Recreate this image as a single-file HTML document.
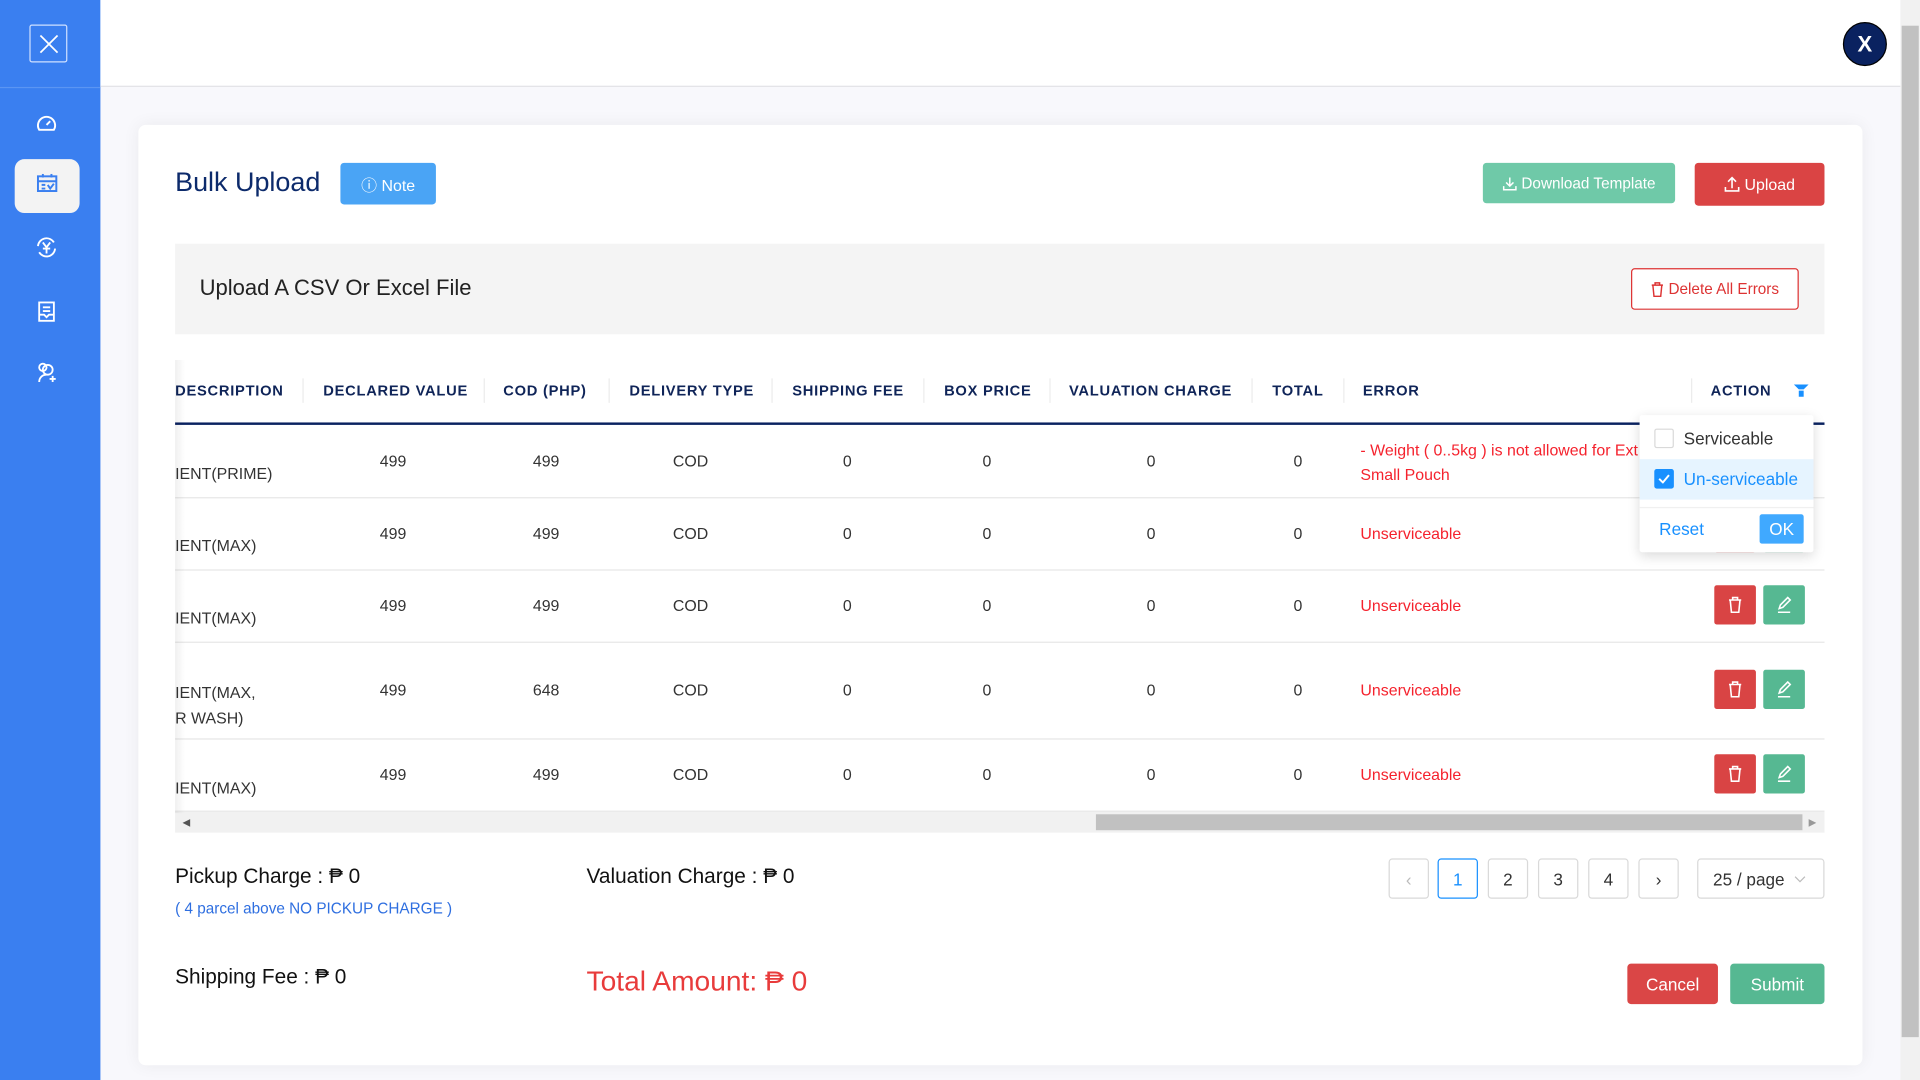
<!DOCTYPE html>
<html><head><meta charset="utf-8"><style>
*{box-sizing:border-box;margin:0;padding:0}
html,body{width:1920px;height:1080px;overflow:hidden;background:#fff;font-family:"Liberation Sans",sans-serif}
#w{position:absolute;left:0;top:0;width:1568px;height:882px;transform:scale(1.22449);transform-origin:0 0;background:#f8f8fc}
.a{position:absolute}
.side{left:0;top:0;width:82px;height:882px;background:#3a7ff0}
.hdr{left:82px;top:0;width:1470px;height:71px;background:#fff;border-bottom:1px solid #e2e2e6}
.card{left:113px;top:102px;width:1408px;height:768px;background:#fff;border-radius:6px;box-shadow:0 0 14px rgba(0,0,0,.06)}
.th{top:312px;font-size:12px;font-weight:bold;color:#0f2458;letter-spacing:.6px;white-space:nowrap}
.sep{top:309px;width:1px;height:20px;background:#ececec}
.td{font-size:13px;color:#333;white-space:nowrap;transform:translateX(-50%)}
.err{font-size:13px;color:#f5222d;white-space:nowrap}
.hl{left:143px;width:1347px;height:1px;background:#e6e6e6}
.btn{border-radius:3px;color:#fff;font-size:12.5px;display:flex;align-items:center;justify-content:center}
.ib{width:34px;height:32px;border-radius:2px;display:flex;align-items:center;justify-content:center}
.pg{top:701px;width:33px;height:33px;border:1px solid #d9d9d9;border-radius:3px;font-size:14px;color:#333;display:flex;align-items:center;justify-content:center;background:#fff}
</style></head><body><div id="w">
<div class="a side">
 <div class="a" style="left:24px;top:20px;width:31px;height:31px;border:1px solid #cfe0ff;border-radius:2px"><svg class="a" style="left:7px;top:7px" width="16" height="16" viewBox="0 0 16 16" stroke="#fff" stroke-width="1.4"><path d="M1 1l14 14M15 1L1 15"/></svg></div>
 <div class="a" style="left:0;top:71px;width:82px;height:1px;background:#5a95f3"></div>
 <svg class="a" style="left:29px;top:92px" width="18" height="16" viewBox="0 0 18 16" fill="none" stroke="#fff" stroke-width="1.6"><path d="M3 14a7 7 0 1 1 12 0z"/><path d="M9 10l3-3"/></svg>
 <div class="a" style="left:12px;top:130px;width:53px;height:44px;background:#f3f3f3;border-radius:8px"></div>
 <svg class="a" style="left:30px;top:142px" width="17" height="15" viewBox="0 0 17 15" fill="none" stroke="#3a7ff0" stroke-width="1.6"><rect x="1" y="2" width="15" height="12"/><path d="M1 6h15M5 0v3M12 0v3M4 9h3M4 12h3M9 9l2 3 3-4"/></svg>
 <svg class="a" style="left:29px;top:193px" width="18" height="18" viewBox="0 0 18 18" fill="none" stroke="#fff" stroke-width="1.5"><path d="M2 8a7 7 0 0 1 13-3M16 10a7 7 0 0 1-13 3M6 5l3 4 3-4M9 9v5M6 10h6"/></svg>
 <svg class="a" style="left:31px;top:246px" width="14" height="17" viewBox="0 0 14 17" fill="none" stroke="#fff" stroke-width="1.5"><rect x="1" y="1" width="12" height="15"/><path d="M4 5h6M4 8h6M1 11h4l2 2 2-2h4"/></svg>
 <svg class="a" style="left:30px;top:296px" width="18" height="17" viewBox="0 0 18 17" fill="none" stroke="#fff" stroke-width="1.5"><circle cx="9" cy="6" r="4"/><path d="M2 16c0-4 3-6 6-6M13 11v5M10.5 13.5h5"/><circle cx="5" cy="4" r="3"/></svg>
</div>
<div class="a hdr"></div>
<div class="a" style="left:1505px;top:18px;width:36px;height:36px;border-radius:50%;background:#0a2260;border:1px solid #000;color:#fff;font-weight:bold;font-size:18px;display:flex;align-items:center;justify-content:center">X</div>
<div class="a" style="left:1552px;top:0;width:16px;height:882px;background:#f1f1f1"><div class="a" style="left:1px;top:21px;width:14px;height:826px;background:#c1c1c1"></div></div>
<div class="a card"></div>
<div class="a" style="left:143px;top:136px;font-size:22px;color:#0c2a6b">Bulk Upload</div>
<div class="a btn" style="left:278px;top:133px;width:78px;height:34px;background:#4aa4f5;font-size:13px">ⓘ&nbsp;Note</div>
<div class="a btn" style="left:1211px;top:133px;width:157px;height:33px;background:#6fc9a8"><svg width="12" height="12" viewBox="0 0 12 12" fill="none" stroke="#fff" stroke-width="1.2"><path d="M6 1v7M3 5l3 3 3-3M1 8v3h10V8"/></svg>&nbsp;Download Template</div>
<div class="a btn" style="left:1384px;top:133px;width:106px;height:35px;background:#da4444;font-size:13px"><svg width="13" height="13" viewBox="0 0 12 12" fill="none" stroke="#fff" stroke-width="1.2"><path d="M6 9V1M3 4l3-3 3 3M1 8v3h10V8"/></svg>&nbsp;Upload</div>
<div class="a" style="left:143px;top:199px;width:1347px;height:74px;background:#f4f4f4"></div>
<div class="a" style="left:163px;top:225px;font-size:18px;color:#222">Upload A CSV Or Excel File</div>
<div class="a" style="left:1332px;top:219px;width:137px;height:34px;border:1px solid #d33;border-radius:3px;color:#d33;font-size:12.5px;display:flex;align-items:center;justify-content:center;background:#fff"><svg width="11" height="13" viewBox="0 0 12 14" fill="none" stroke="#d33" stroke-width="1.3"><path d="M1 3h10M4 3V1h4v2M2 3l1 10h6l1-10"/></svg>&nbsp;Delete All Errors</div>

<div class="a th" style="left:143px">DESCRIPTION</div><div class="a sep" style="left:247px"></div>
<div class="a th" style="left:264px">DECLARED VALUE</div><div class="a sep" style="left:395px"></div>
<div class="a th" style="left:411px">COD (PHP)</div><div class="a sep" style="left:497px"></div>
<div class="a th" style="left:514px">DELIVERY TYPE</div><div class="a sep" style="left:630px"></div>
<div class="a th" style="left:647px">SHIPPING FEE</div><div class="a sep" style="left:754px"></div>
<div class="a th" style="left:771px">BOX PRICE</div><div class="a sep" style="left:857px"></div>
<div class="a th" style="left:873px">VALUATION CHARGE</div><div class="a sep" style="left:1022px"></div>
<div class="a th" style="left:1039px">TOTAL</div><div class="a sep" style="left:1097px"></div>
<div class="a th" style="left:1113px">ERROR</div><div class="a sep" style="left:1381px"></div>
<div class="a th" style="left:1397px">ACTION</div>
<svg class="a" style="left:1465px;top:313px" width="12" height="12" viewBox="0 0 12 12"><path d="M0 1h12L8 5H4z M4 6h4v5H4z" fill="#1890ff"/></svg>
<div class="a" style="left:143px;top:345px;width:1347px;height:2px;background:#0a2260"></div>
<div class="a hl" style="top:406px"></div><div class="a hl" style="top:465px"></div><div class="a hl" style="top:524px"></div><div class="a hl" style="top:603px"></div><div class="a hl" style="top:662px"></div>

<div class="a" style="left:143px;top:379px;font-size:13px;color:#333">IENT(PRIME)</div>
<div class="a" style="left:143px;top:438px;font-size:13px;color:#333">IENT(MAX)</div>
<div class="a" style="left:143px;top:497px;font-size:13px;color:#333">IENT(MAX)</div>
<div class="a" style="left:143px;top:555px;font-size:13px;color:#333;line-height:21px">IENT(MAX,<br>R WASH)</div>
<div class="a" style="left:143px;top:636px;font-size:13px;color:#333">IENT(MAX)</div>

<div class="a td" style="left:321px;top:369px">499</div><div class="a td" style="left:446px;top:369px">499</div><div class="a td" style="left:564px;top:369px">COD</div><div class="a td" style="left:692px;top:369px">0</div><div class="a td" style="left:806px;top:369px">0</div><div class="a td" style="left:940px;top:369px">0</div><div class="a td" style="left:1060px;top:369px">0</div>
<div class="a td" style="left:321px;top:428px">499</div><div class="a td" style="left:446px;top:428px">499</div><div class="a td" style="left:564px;top:428px">COD</div><div class="a td" style="left:692px;top:428px">0</div><div class="a td" style="left:806px;top:428px">0</div><div class="a td" style="left:940px;top:428px">0</div><div class="a td" style="left:1060px;top:428px">0</div>
<div class="a td" style="left:321px;top:487px">499</div><div class="a td" style="left:446px;top:487px">499</div><div class="a td" style="left:564px;top:487px">COD</div><div class="a td" style="left:692px;top:487px">0</div><div class="a td" style="left:806px;top:487px">0</div><div class="a td" style="left:940px;top:487px">0</div><div class="a td" style="left:1060px;top:487px">0</div>
<div class="a td" style="left:321px;top:556px">499</div><div class="a td" style="left:446px;top:556px">648</div><div class="a td" style="left:564px;top:556px">COD</div><div class="a td" style="left:692px;top:556px">0</div><div class="a td" style="left:806px;top:556px">0</div><div class="a td" style="left:940px;top:556px">0</div><div class="a td" style="left:1060px;top:556px">0</div>
<div class="a td" style="left:321px;top:625px">499</div><div class="a td" style="left:446px;top:625px">499</div><div class="a td" style="left:564px;top:625px">COD</div><div class="a td" style="left:692px;top:625px">0</div><div class="a td" style="left:806px;top:625px">0</div><div class="a td" style="left:940px;top:625px">0</div><div class="a td" style="left:1060px;top:625px">0</div>

<div class="a err" style="left:1111px;top:358px;line-height:20px;width:229px;overflow:hidden">- Weight ( 0..5kg ) is not allowed for Ext<br>Small Pouch</div>
<div class="a err" style="left:1111px;top:428px">Unserviceable</div>
<div class="a err" style="left:1111px;top:487px">Unserviceable</div>
<div class="a err" style="left:1111px;top:556px">Unserviceable</div>
<div class="a err" style="left:1111px;top:625px">Unserviceable</div>

<div class="a ib" style="left:1400px;top:435px;height:16px;background:#d94444"></div><div class="a ib" style="left:1440px;top:435px;height:16px;background:#56b892"></div>
<div class="a ib" style="left:1400px;top:478px;background:#d94444"><svg width="12" height="14" viewBox="0 0 12 14" fill="none" stroke="#fff" stroke-width="1.3"><path d="M1 3h10M4 3V1h4v2M2 3l1 10h6l1-10"/></svg></div>
<div class="a ib" style="left:1440px;top:478px;background:#56b892"><svg width="14" height="14" viewBox="0 0 14 14" fill="none" stroke="#fff" stroke-width="1.3"><path d="M3 10l1-3 6-6 2 2-6 6zM2 13h10"/></svg></div>
<div class="a ib" style="left:1400px;top:547px;background:#d94444"><svg width="12" height="14" viewBox="0 0 12 14" fill="none" stroke="#fff" stroke-width="1.3"><path d="M1 3h10M4 3V1h4v2M2 3l1 10h6l1-10"/></svg></div>
<div class="a ib" style="left:1440px;top:547px;background:#56b892"><svg width="14" height="14" viewBox="0 0 14 14" fill="none" stroke="#fff" stroke-width="1.3"><path d="M3 10l1-3 6-6 2 2-6 6zM2 13h10"/></svg></div>
<div class="a ib" style="left:1400px;top:616px;background:#d94444"><svg width="12" height="14" viewBox="0 0 12 14" fill="none" stroke="#fff" stroke-width="1.3"><path d="M1 3h10M4 3V1h4v2M2 3l1 10h6l1-10"/></svg></div>
<div class="a ib" style="left:1440px;top:616px;background:#56b892"><svg width="14" height="14" viewBox="0 0 14 14" fill="none" stroke="#fff" stroke-width="1.3"><path d="M3 10l1-3 6-6 2 2-6 6zM2 13h10"/></svg></div>

<div class="a" style="left:1339px;top:339px;width:142px;height:112px;background:#fff;box-shadow:0 3px 10px rgba(0,0,0,.15);border-radius:2px">
 <div class="a" style="left:12px;top:11px;width:16px;height:16px;border:1px solid #d9d9d9;border-radius:2px"></div>
 <div class="a" style="left:36px;top:11px;font-size:14px;color:#333">Serviceable</div>
 <div class="a" style="left:0;top:36px;width:142px;height:33px;background:#e6f4ff"></div>
 <div class="a" style="left:12px;top:44px;width:16px;height:16px;background:#1890ff;border-radius:2px"><svg class="a" style="left:3px;top:4px" width="10" height="8" viewBox="0 0 10 8" fill="none" stroke="#fff" stroke-width="1.6"><path d="M1 4l3 3 5-6"/></svg></div>
 <div class="a" style="left:36px;top:44px;font-size:14px;color:#1890ff">Un-serviceable</div>
 <div class="a" style="left:0;top:75px;width:142px;height:1px;background:#f0f0f0"></div>
 <div class="a" style="left:16px;top:85px;font-size:14px;color:#1890ff">Reset</div>
 <div class="a" style="left:98px;top:81px;width:36px;height:24px;background:#40a9ff;border-radius:2px;color:#fff;font-size:14px;text-align:center;line-height:24px">OK</div>
</div>

<div class="a" style="left:143px;top:663px;width:1347px;height:17px;background:#f1f1f1"><div class="a" style="left:752px;top:2px;width:577px;height:13px;background:#c1c1c1"></div><div class="a" style="left:6px;top:4px;font-size:8px;color:#555">◀</div><div class="a" style="left:1334px;top:4px;font-size:8px;color:#999">▶</div></div>
<div class="a" style="left:143px;top:294px;width:8px;height:370px;background:linear-gradient(90deg,rgba(0,0,0,.06),rgba(0,0,0,0))"></div>

<div class="a" style="left:143px;top:706px;font-size:17px;color:#111">Pickup Charge : ₱ 0</div>
<div class="a" style="left:143px;top:735px;font-size:12.5px;color:#2f6fe0">( 4 parcel above NO PICKUP CHARGE )</div>
<div class="a" style="left:479px;top:706px;font-size:17px;color:#111">Valuation Charge : ₱ 0</div>
<div class="a" style="left:143px;top:788px;font-size:17px;color:#111">Shipping Fee : ₱ 0</div>
<div class="a" style="left:479px;top:788px;font-size:23px;color:#e83b3b">Total Amount: ₱ 0</div>

<div class="a pg" style="left:1134px;color:#bbb">‹</div>
<div class="a pg" style="left:1174px;border-color:#1890ff;color:#1890ff">1</div>
<div class="a pg" style="left:1215px">2</div>
<div class="a pg" style="left:1256px">3</div>
<div class="a pg" style="left:1297px">4</div>
<div class="a pg" style="left:1338px">›</div>
<div class="a pg" style="left:1386px;width:104px;justify-content:flex-start;padding-left:12px">25 / page <svg style="margin-left:8px" width="10" height="6" viewBox="0 0 10 6" fill="none" stroke="#bbb"><path d="M1 1l4 4 4-4"/></svg></div>
<div class="a btn" style="left:1329px;top:787px;width:74px;height:33px;background:#da4646;font-size:14px">Cancel</div>
<div class="a btn" style="left:1413px;top:787px;width:77px;height:33px;background:#56b892;font-size:14px">Submit</div>
</div></body></html>
